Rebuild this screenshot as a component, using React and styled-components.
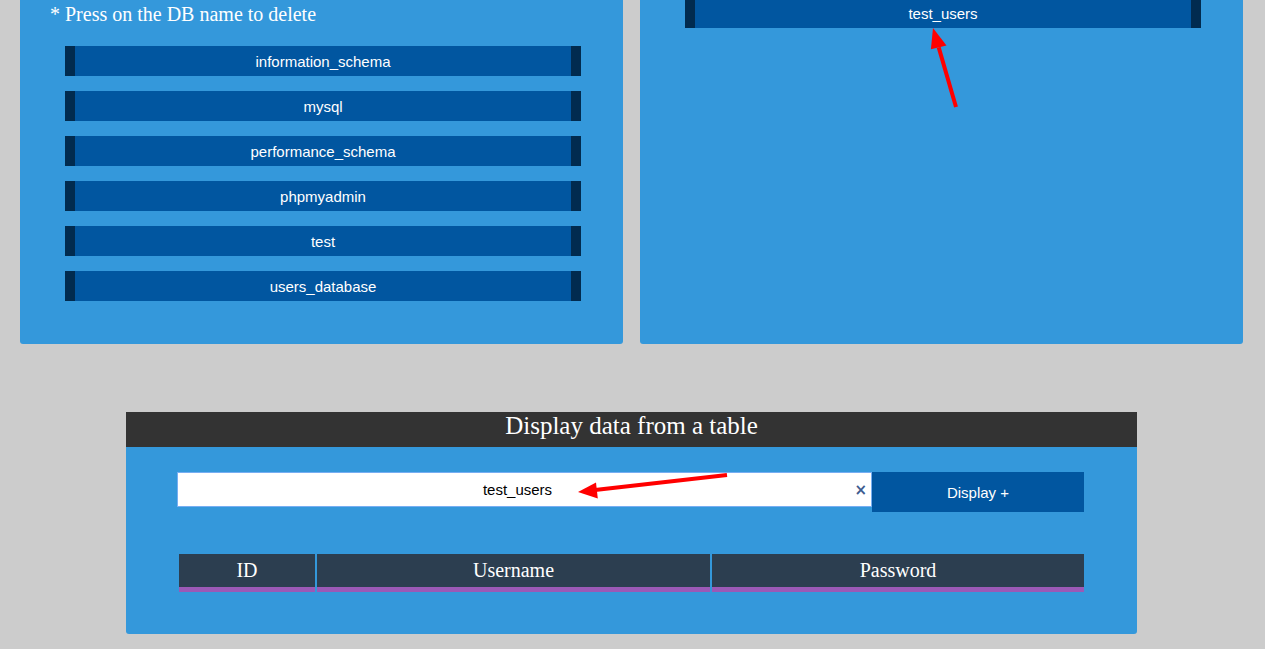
import React from "react";
import styled, { createGlobalStyle } from "styled-components";

const GlobalStyle = createGlobalStyle`
  html, body { margin: 0; padding: 0; background: #cccccc; }
  body { font-family: "Liberation Sans", Arial, sans-serif; overflow: hidden; }
  * { box-sizing: border-box; }
`;

const Page = styled.div`
  width: 1265px;
  height: 649px;
  overflow: hidden;
`;

const TopRow = styled.div`
  display: flex;
  gap: 17px;
  padding-left: 20px;
`;

const Panel = styled.section`
  width: 603px;
  height: 344px;
  background: #3498db;
  border-radius: 0 0 3px 3px;
  display: flex;
  flex-direction: column;
`;

const PanelNote = styled.h3`
  margin: 3px 0 0 30px;
  font-family: "Liberation Serif", "Times New Roman", serif;
  font-weight: normal;
  font-size: 20px;
  line-height: 23px;
  color: #ffffff;
`;

const ButtonList = styled.div`
  display: flex;
  flex-direction: column;
  gap: 15px;
  margin-left: 45px;
  margin-top: ${(p) => p.$top}px;
`;

const DbButton = styled.div`
  position: relative;
  width: 516px;
  height: 30px;
  background: #0156a0;
  border-left: 10px solid #012b4f;
  border-right: 10px solid #012b4f;
  color: #ffffff;
  font-family: "Liberation Sans", Arial, sans-serif;
  font-size: 15px;
  line-height: 32px;
  text-align: center;
  cursor: pointer;
`;

const ArrowSvg = styled.svg`
  position: absolute;
  left: 0;
  top: 0;
  overflow: visible;
  pointer-events: none;
`;

const Section = styled.section`
  width: 1011px;
  margin: 68px 0 0 126px;
  border-radius: 0 0 3px 3px;
  overflow: hidden;
`;

const SectionTitle = styled.h2`
  margin: 0;
  height: 35px;
  background: #333333;
  color: #ffffff;
  font-family: "Liberation Serif", "Times New Roman", serif;
  font-weight: normal;
  font-size: 25px;
  line-height: 27px;
  text-align: center;
`;

const SectionBody = styled.div`
  background: #3498db;
  padding: 25px 53px 42px 51px;
`;

const SearchRow = styled.div`
  display: flex;
  align-items: flex-start;
`;

const InputWrap = styled.div`
  position: relative;
  width: 695px;
  height: 35px;
`;

const SearchInput = styled.input`
  width: 100%;
  height: 35px;
  border: 1px solid #77aef2;
  background: #ffffff;
  padding: 0 17px 0 3px;
  font-family: "Liberation Sans", Arial, sans-serif;
  font-size: 15px;
  color: #000000;
  text-align: center;
  outline: none;
`;

const ClearMark = styled.span`
  position: absolute;
  right: 5px;
  top: 8px;
  font-family: "DejaVu Sans", sans-serif;
  font-size: 15px;
  font-weight: bold;
  line-height: 20px;
  color: #3d5b8f;
`;

const DisplayButton = styled.button`
  width: 212px;
  height: 40px;
  border: none;
  background: #0156a0;
  color: #ffffff;
  font-family: "Liberation Sans", Arial, sans-serif;
  font-size: 15px;
  padding: 0;
  padding-top: 1px;
  cursor: pointer;
`;

const TableHead = styled.div`
  display: grid;
  grid-template-columns: 136px 393px 372px;
  gap: 2px;
  margin: 42px 0 0 2px;
`;

const HeadCell = styled.div`
  height: 38px;
  background: #2c3e50;
  border-bottom: 5px solid #9b59b6;
  color: #ffffff;
  font-family: "Liberation Serif", "Times New Roman", serif;
  font-size: 20px;
  line-height: 33px;
  text-align: center;
`;

function Arrow({ tip, base, c1, c2, tail }) {
  return (
    <ArrowSvg width="1" height="1">
      <line x1={tail[0]} y1={tail[1]} x2={base[0]} y2={base[1]} stroke="#ff0000" strokeWidth="4" />
      <polygon points={`${tip[0]},${tip[1]} ${c1[0]},${c1[1]} ${c2[0]},${c2[1]}`} fill="#ff0000" />
    </ArrowSvg>
  );
}

const databases = [
  "information_schema",
  "mysql",
  "performance_schema",
  "phpmyadmin",
  "test",
  "users_database",
];

export default function App() {
  return (
    <Page>
      <GlobalStyle />
      <TopRow>
        <Panel>
          <PanelNote>* Press on the DB name to delete</PanelNote>
          <ButtonList $top={20}>
            {databases.map((db) => (
              <DbButton key={db}>{db}</DbButton>
            ))}
          </ButtonList>
        </Panel>
        <Panel>
          <ButtonList $top={-2}>
            <DbButton>
              test_users
              <Arrow
                tip={[238, 30]}
                base={[243.7, 49.4]}
                c1={[251.5, 47.5]}
                c2={[235.9, 51.3]}
                tail={[261, 109]}
              />
            </DbButton>
          </ButtonList>
        </Panel>
      </TopRow>
      <Section>
        <SectionTitle>Display data from a table</SectionTitle>
        <SectionBody>
          <SearchRow>
            <InputWrap>
              <SearchInput type="text" defaultValue="test_users" />
              <ClearMark>×</ClearMark>
              <Arrow
                tip={[401, 20]}
                base={[418, 18]}
                c1={[420.8, 26.5]}
                c2={[419, 10.5]}
                tail={[550, 3]}
              />
            </InputWrap>
            <DisplayButton>Display +</DisplayButton>
          </SearchRow>
          <TableHead>
            <HeadCell>ID</HeadCell>
            <HeadCell>Username</HeadCell>
            <HeadCell>Password</HeadCell>
          </TableHead>
        </SectionBody>
      </Section>
    </Page>
  );
}
